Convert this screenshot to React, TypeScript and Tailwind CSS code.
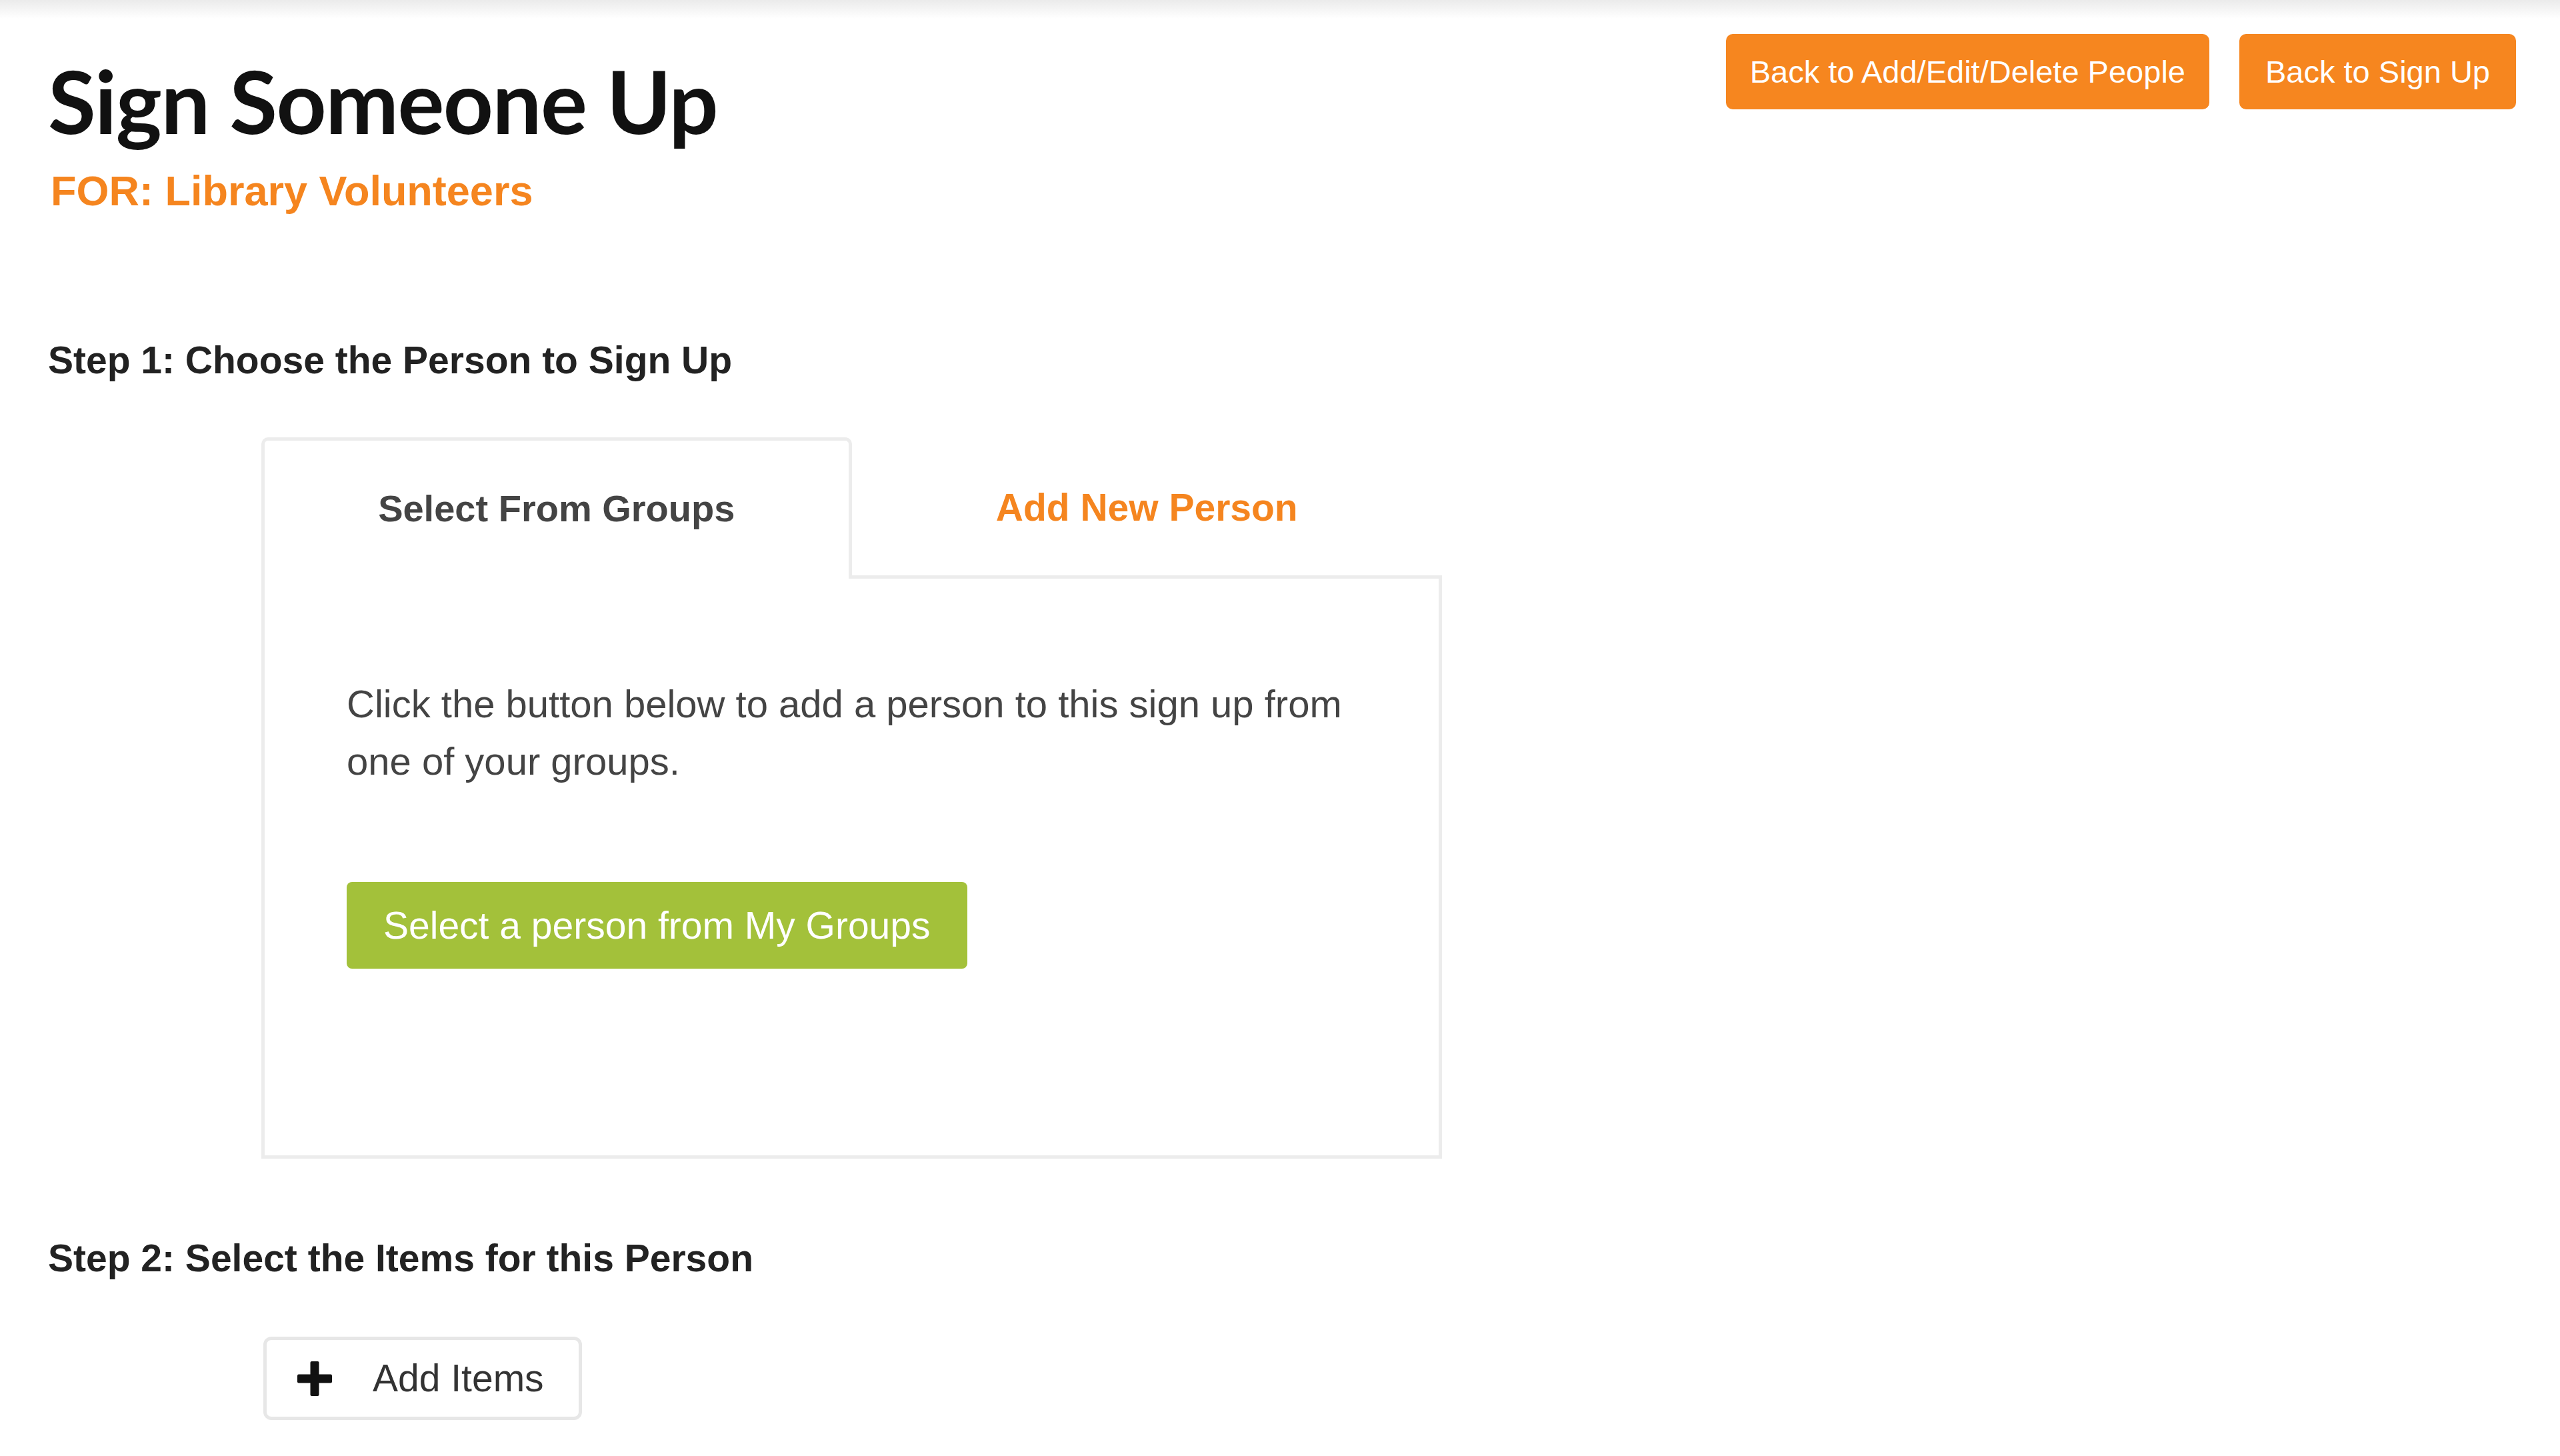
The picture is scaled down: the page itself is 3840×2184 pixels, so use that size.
import React from "react";

function PlusIcon() {
  return (
    <svg width="52" height="52" viewBox="0 0 52 52" aria-hidden="true">
      <rect x="19.5" y="0" width="13" height="52" rx="2" fill="#111" />
      <rect x="0" y="19.5" width="52" height="13" rx="2" fill="#111" />
    </svg>
  );
}

export default function App() {
  return (
    <div className="relative min-h-[2184px] w-full bg-white font-['Liberation_Sans',Arial,Helvetica,sans-serif]">
      <div className="pointer-events-none absolute inset-x-0 top-0 h-[28px] bg-gradient-to-b from-[#ebebeb] to-white" />

      <div className="relative flex items-start justify-between pl-[72px] pr-[66px] pt-[51px]">
        <div className="mt-[34px] flex flex-col">
          <h1 className="font-['Lato',sans-serif] text-[131px] font-bold leading-none tracking-[-1.5px] text-[#111]">
            Sign Someone Up
          </h1>
          <div className="ml-[4px] mt-[39px] text-[63px] font-bold leading-none text-[#f5851f]">
            FOR: Library Volunteers
          </div>
        </div>
        <div className="flex items-center gap-[45px]">
          <button className="h-[113px] rounded-[10px] bg-[#f6861f] px-[36px] text-[47px] leading-none text-white">
            Back to Add/Edit/Delete People
          </button>
          <button className="h-[113px] rounded-[10px] bg-[#f6861f] px-[39px] text-[47px] leading-none text-white">
            Back to Sign Up
          </button>
        </div>
      </div>

      <div className="pl-[72px]">
        <h2 className="mt-[194px] text-[57px] font-bold leading-none text-[#222]">
          Step 1: Choose the Person to Sign Up
        </h2>

        <div className="ml-[320px] mt-[87px] w-[1771px]">
          <div className="grid grid-cols-2">
            <div className="flex h-[212px] items-center justify-center rounded-t-[10px] border-x-[5px] border-t-[5px] border-[#ececec] bg-white pb-[4px] text-[56px] font-bold leading-none text-[#444]">
              Select From Groups
            </div>
            <div className="flex h-[212px] items-center justify-center border-b-[5px] border-[#ececec] pt-[4px] text-[57px] font-bold leading-none text-[#f5851f]">
              Add New Person
            </div>
          </div>
          <div className="h-[870px] border-x-[5px] border-b-[5px] border-[#ececec] pl-[123px] pt-[145px]">
            <p className="max-w-[1540px] text-[58px] leading-[86px] text-[#444]">
              Click the button below to add a person to this sign up from one of your groups.
            </p>
            <button className="mt-[138px] h-[130px] rounded-[8px] bg-[#a3c13a] px-[55px] text-[57px] leading-none text-white">
              Select a person from My Groups
            </button>
          </div>
        </div>

        <h2 className="mt-[121px] text-[57px] font-bold leading-none text-[#222]">
          Step 2: Select the Items for this Person
        </h2>

        <button className="ml-[323px] mt-[89px] flex h-[125px] items-center rounded-[12px] border-[5px] border-[#e7e7e7] bg-white pl-[46px] pr-[52px]">
          <PlusIcon />
          <span className="ml-[61px] text-[57px] leading-none text-[#333]">Add Items</span>
        </button>
      </div>
    </div>
  );
}
